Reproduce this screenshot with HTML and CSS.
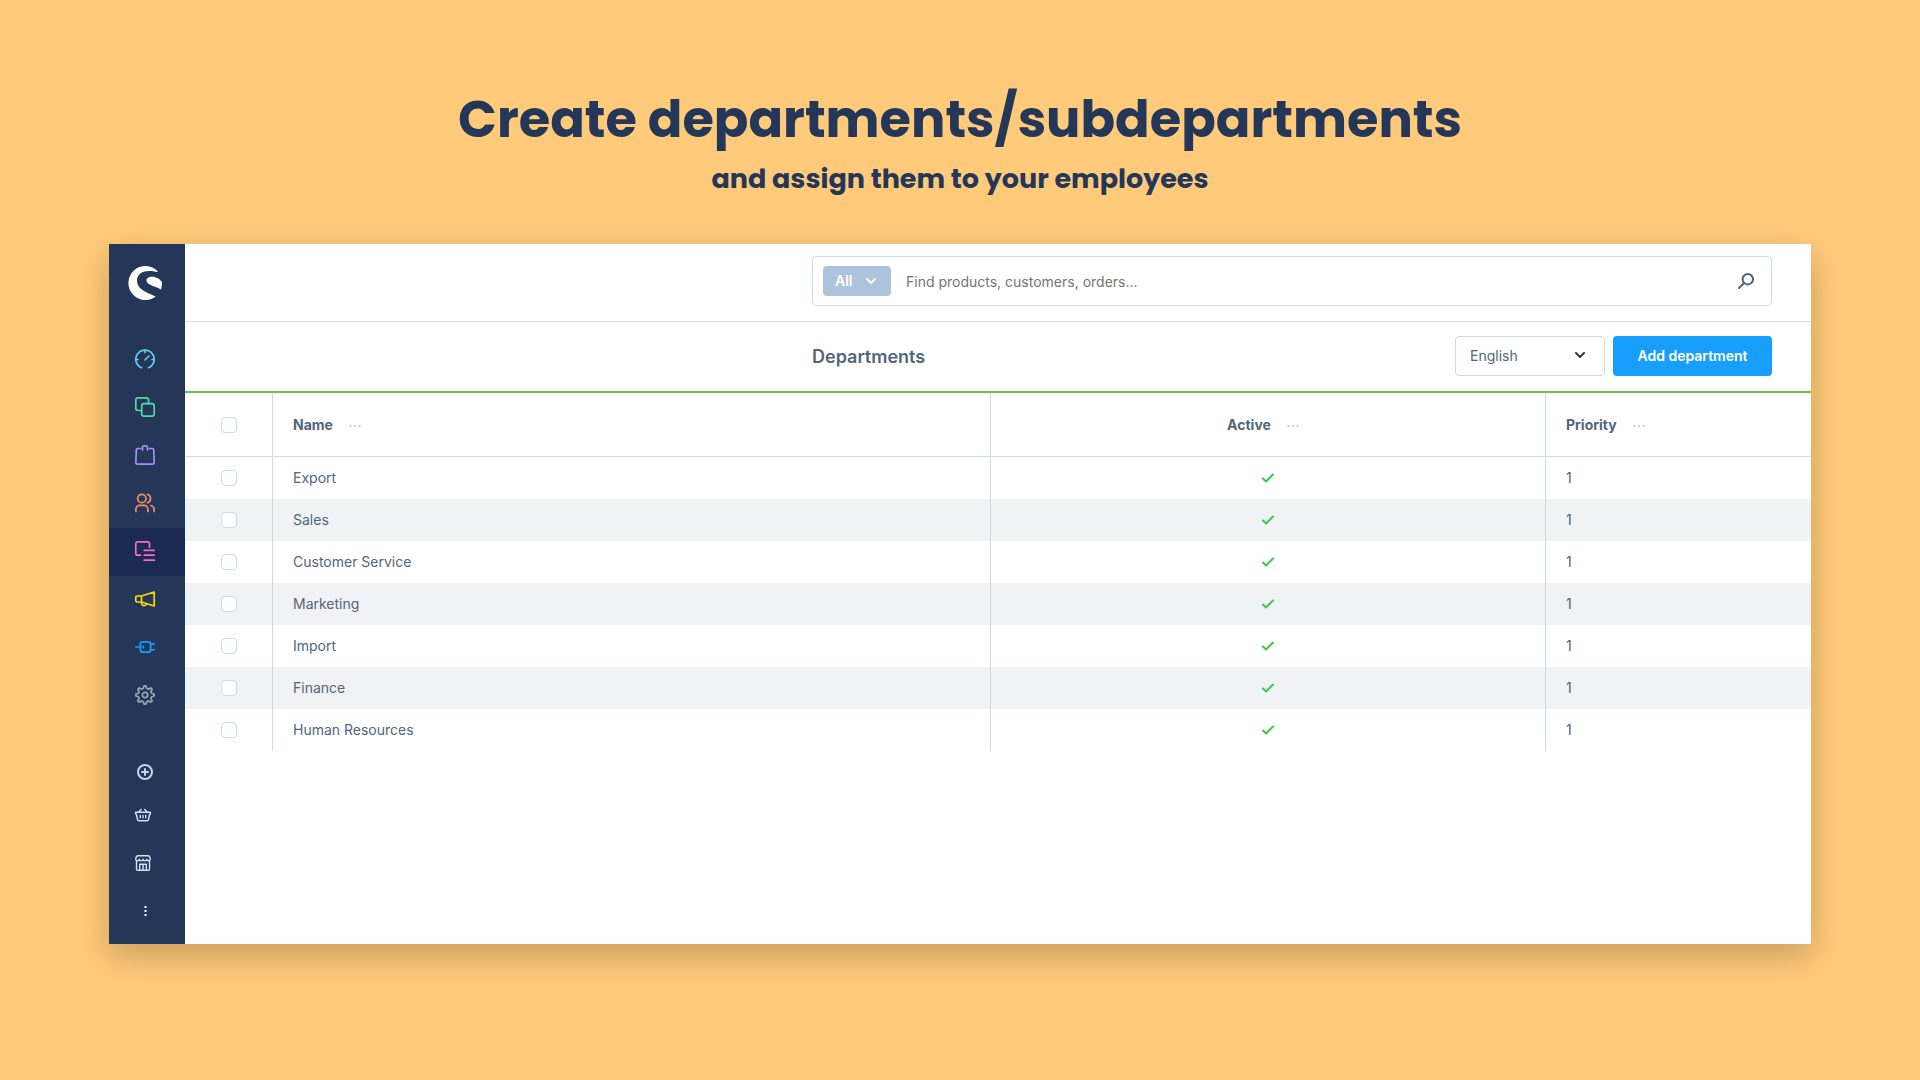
FILE: index.html
```html
<!DOCTYPE html>
<html lang="en">
<head>
<meta charset="utf-8">
<meta name="viewport" content="width=device-width, initial-scale=1">
<title>Departments</title>
<link rel="stylesheet" href="styles.css">
</head>
<body>
<header class="hero">
  <h1 class="hero-title">Create departments/subdepartments</h1>
  <p class="hero-subtitle">and assign them to your employees</p>
</header>

<div class="app">
  <aside class="sidebar">
    <a class="logo" href="#" aria-label="Home">
      <svg width="34" height="34" viewBox="0 0 34 34" fill="#fff"><path d="M29.6 5.2A17 17 0 1 0 27.2 31c.3-.3.2-.6-.2-.8C22.700 27.500 9 24.800 9 14.500 9 8 14.600 4.900 21 4.900c3 0 5.600.5 8.400 1 .4 0 .5-.4.2-.7zM33.900 16.200c-1.800-3.100-5.700-5.400-9.700-5.400-3.300 0-5.700 1.400-5.700 3.700 0 4.400 8.300 5.300 13.800 8.800.4.300.7.200.8-.2.700-2 1-4.600.8-6.900z"/></svg>
    </a>
    <nav class="nav" aria-label="Main">
      <a class="nav-item cyan" href="#" aria-label="Dashboard"><svg class="icon" viewBox="0 0 20 20"><path d="M6.600 18.800A9.200 9.200 0 1 1 13.400 18.800M10 1.500v2M1 10.500h2M17 10.500h2M10 11l4-4"/></svg></a>
      <a class="nav-item green" href="#" aria-label="Catalogues"><svg class="icon" viewBox="0 0 20 20"><path d="M6.500 13.500H3A2.200 2.200 0 0 1 .8 11.300V3A2.200 2.200 0 0 1 3 .8h8.300A2.200 2.200 0 0 1 13.500 3v3.500"/><rect x="6.700" y="6.700" width="12.500" height="12.500" rx="2.200"/></svg></a>
      <a class="nav-item violet" href="#" aria-label="Orders"><svg class="icon" viewBox="0 0 20 20"><path d="M7.500 5V2.300A1.500 1.500 0 0 1 9 .8h2a1.500 1.500 0 0 1 1.500 1.500V5M5.500 3.500H2.800a1.500 1.500 0 0 0-1.500 1.500L.8 17.500a1.600 1.600 0 0 0 1.600 1.700h15.200a1.600 1.600 0 0 0 1.600-1.700L18.700 5a1.500 1.500 0 0 0-1.500-1.500h-2.700"/></svg></a>
      <a class="nav-item orange" href="#" aria-label="Customers"><svg class="icon" viewBox="0 0 20 20"><circle cx="6.800" cy="5.500" r="4.200"/><path d="M12.500 1.300a4.500 4.500 0 0 1 0 8.500M.9 18.500v-2.300A3.800 3.800 0 0 1 4.700 12.400h4.400a3.800 3.800 0 0 1 3.800 3.800v2.300M15.800 12.500c2 .5 3.300 2 3.300 3.900v2.100"/></svg></a>
      <a class="nav-item pink active" href="#" aria-label="Content"><svg class="icon" viewBox="0 0 20 20"><path d="M5.500 14.200H2.800a2 2 0 0 1-2-2V2.800a2 2 0 0 1 2-2h9.700a2 2 0 0 1 2 2v3.400M9.200 9.300h10M9.200 14.200h10M9.200 19.200h10"/></svg></a>
      <a class="nav-item yellow" href="#" aria-label="Marketing"><svg class="icon" viewBox="0 0 20 20"><path d="M6.500 7L19.200 3v14L6.500 13zM6.500 7H2a1.200 1.200 0 0 0-1.200 1.200v3.600A1.200 1.200 0 0 0 2 13h4.500M6.500 13v1.200a2.500 2.500 0 0 0 4.700 1.200"/></svg></a>
      <a class="nav-item blue" href="#" aria-label="Extensions"><svg class="icon" viewBox="0 0 20 20"><path d="M.8 10h4.600M15.600 7.200h3.600M15.600 12.800h3.600M8.300 9.300v1.400"/><rect x="5.400" y="4.900" width="10.200" height="10.200" rx="2"/></svg></a>
      <a class="nav-item grey" href="#" aria-label="Settings"><svg class="icon" viewBox="0 0 20 20"><path d="M8.300 3.300L9 .9h2l.7 2.400 1.900.8 2.200-1.200 1.400 1.400-1.300 2.200.8 1.800 2.400.7v2l-2.400.7-.8 1.900 1.200 2.200-1.400 1.400-2.200-1.300-1.800.8-.7 2.400H9l-.7-2.400-1.900-.8-2.200 1.300-1.400-1.400 1.300-2.200-.8-1.900-2.400-.7V9l2.400-.7.8-1.800-1.300-2.200 1.400-1.400 2.200 1.200z"/><circle cx="10" cy="10" r="2.700"/></svg></a>
    </nav>
    <div class="tools">
      <button class="tool tool-short" type="button" aria-label="Add"><svg class="tool-icon bold" viewBox="0 0 16 16"><circle cx="8" cy="8" r="7"/><path d="M8 5v6M5 8h6"/></svg></button>
      <a class="tool tool-left" href="#" aria-label="Store basket"><svg class="tool-icon" viewBox="0 0 16 16"><path d="M.7 5.200h14.600v1.600a.8.800 0 0 1-.8.700M1.500 7.500a.8.800 0 0 1-.8-.7V5.200M1.500 7.500l1 5a1.500 1.500 0 0 0 1.500 1.200h8a1.500 1.500 0 0 0 1.500-1.200l1-5M3.700 5l2.500-2.600M12.300 5L9.800 2.400M5.300 8.500v2.300M8 8.500v2.300M10.700 8.500v2.300"/></svg></a>
      <a class="tool tool-left" href="#" aria-label="Storefront"><svg class="tool-icon" viewBox="0 0 16 16"><path d="M3 .7h10c1.300 0 2.300 1.800 2.300 3.300 0 2.200-3.300 2.200-3.600.3-.3 1.900-3.400 1.900-3.700 0-.3 1.900-3.400 1.900-3.700 0C4 6.200.7 6.200.7 4 .7 2.500 1.700.7 3 .7zM1.500 6v8.300a1 1 0 0 0 1 1h11a1 1 0 0 0 1-1V6M4.700 15.300V9.200h6.600v6.100M8 9.200v6.100"/></svg></a>
      <button class="tool" type="button" aria-label="More"><svg class="tool-icon dots" viewBox="0 0 16 16"><path d="M7.500 3h2v2h-2zM7.500 7h2v2h-2zM7.500 11h2v2h-2z"/></svg></button>
    </div>
  </aside>

  <main class="main">
    <div class="topbar">
      <form class="search" role="search">
        <button class="scope" type="button">All
          <svg width="10" height="6" viewBox="0 0 10 6"><path d="M1 1l4 4 4-4"/></svg>
        </button>
        <input class="search-input" type="search" aria-label="Search" placeholder="Find products, customers, orders...">
        <button class="search-button" type="button" aria-label="Search">
          <svg width="16" height="16" viewBox="0 0 16 16"><circle cx="9.800" cy="6.200" r="5.200"/><path d="M6 10L1 15"/></svg>
        </button>
      </form>
    </div>

    <div class="pagebar">
      <div class="pagebar-inner">
        <h2 class="page-title">Departments</h2>
        <div class="select-wrap">
          <select class="language" aria-label="Language"><option>English</option></select>
          <svg class="chevron" width="10" height="6" viewBox="0 0 10 6"><path d="M1 1l4 4 4-4"/></svg>
        </div>
        <button class="primary" type="button">Add department</button>
      </div>
    </div>

    <table class="grid">
      <colgroup><col class="col-check"><col class="col-name"><col class="col-active"><col></colgroup>
      <thead>
        <tr>
          <th class="check"><input class="box" type="checkbox" aria-label="Select all"></th>
          <th><div class="head">Name<button class="more" type="button" aria-label="Name options"><svg width="12" height="4" viewBox="0 0 12 4"><circle cx="1.500" cy="2" r="1.200"/><circle cx="6" cy="2" r="1.200"/><circle cx="10.500" cy="2" r="1.200"/></svg></button></div></th>
          <th><div class="head centered">Active<button class="more" type="button" aria-label="Active options"><svg width="12" height="4" viewBox="0 0 12 4"><circle cx="1.500" cy="2" r="1.200"/><circle cx="6" cy="2" r="1.200"/><circle cx="10.500" cy="2" r="1.200"/></svg></button></div></th>
          <th><div class="head">Priority<button class="more" type="button" aria-label="Priority options"><svg width="12" height="4" viewBox="0 0 12 4"><circle cx="1.500" cy="2" r="1.200"/><circle cx="6" cy="2" r="1.200"/><circle cx="10.500" cy="2" r="1.200"/></svg></button></div></th>
        </tr>
      </thead>
      <tbody>
        <tr><td class="check"><input class="box" type="checkbox" aria-label="Select Export"></td><td>Export</td><td class="state"><svg class="tick" viewBox="0 0 12 10"><path d="M1 5.500l3 3L11 1.500"/></svg></td><td>1</td></tr>
        <tr><td class="check"><input class="box" type="checkbox" aria-label="Select Sales"></td><td>Sales</td><td class="state"><svg class="tick" viewBox="0 0 12 10"><path d="M1 5.500l3 3L11 1.500"/></svg></td><td>1</td></tr>
        <tr><td class="check"><input class="box" type="checkbox" aria-label="Select Customer Service"></td><td>Customer Service</td><td class="state"><svg class="tick" viewBox="0 0 12 10"><path d="M1 5.500l3 3L11 1.500"/></svg></td><td>1</td></tr>
        <tr><td class="check"><input class="box" type="checkbox" aria-label="Select Marketing"></td><td>Marketing</td><td class="state"><svg class="tick" viewBox="0 0 12 10"><path d="M1 5.500l3 3L11 1.500"/></svg></td><td>1</td></tr>
        <tr><td class="check"><input class="box" type="checkbox" aria-label="Select Import"></td><td>Import</td><td class="state"><svg class="tick" viewBox="0 0 12 10"><path d="M1 5.500l3 3L11 1.500"/></svg></td><td>1</td></tr>
        <tr><td class="check"><input class="box" type="checkbox" aria-label="Select Finance"></td><td>Finance</td><td class="state"><svg class="tick" viewBox="0 0 12 10"><path d="M1 5.500l3 3L11 1.500"/></svg></td><td>1</td></tr>
        <tr><td class="check"><input class="box" type="checkbox" aria-label="Select Human Resources"></td><td>Human Resources</td><td class="state"><svg class="tick" viewBox="0 0 12 10"><path d="M1 5.500l3 3L11 1.500"/></svg></td><td>1</td></tr>
      </tbody>
    </table>
  </main>
</div>
</body>
</html>
```

FILE: styles.css
```css
:root {
  --navy: #243758;
  --text: #52667a;
  --line: #d1d9e0;
}

* { box-sizing: border-box; }

body {
  margin: 0;
  min-height: 100vh;
  padding: 84px 109px;
  background: #ffca7a;
  color: var(--text);
  font: 14px/20px Inter, "Liberation Sans", sans-serif;
}

button, input, select { font: inherit; color: inherit; }
button { border: 0; padding: 0; background: none; cursor: pointer; }
svg { display: block; }

/* Heading above the window */
.hero { height: 160px; text-align: center; color: var(--navy); font-family: Poppins, Inter, sans-serif; }
.hero-title { margin: 0; font-size: 51px; line-height: 70px; font-weight: 700; }
.hero-subtitle { margin: 7px 0 0; font-size: 27px; line-height: 36px; font-weight: 700; }

/* Window */
.app {
  display: flex;
  min-height: 700px;
  background: #fff;
  box-shadow: 0 12px 32px rgba(0, 0, 0, 0.22);
}

/* Sidebar */
.sidebar {
  display: flex;
  flex-direction: column;
  flex: 0 0 76px;
  padding: 22px 0 9px;
  background: var(--navy);
}
.logo { padding-left: 19px; margin-bottom: 36px; }
.nav { display: flex; flex-direction: column; }
.nav-item { display: flex; align-items: center; height: 48px; padding: 0 0 2px 26px; }
.nav-item.active { background: #1a2a50; }
.icon, .tool-icon {
  width: 20px;
  height: 20px;
  fill: none;
  stroke: currentColor;
  stroke-width: 1.7;
  stroke-linecap: round;
  stroke-linejoin: round;
  overflow: visible;
}
.cyan { color: #64cdec; }
.green { color: #57d9a3; }
.violet { color: #a092f0; }
.orange { color: #f88962; }
.pink { color: #f16dc0; }
.yellow { color: #ffd700; }
.blue { color: #189eff; }
.grey { color: #98a5b6; }

.tools { display: flex; flex-direction: column; margin-top: auto; color: #d3e0f8; }
.tool { display: flex; align-items: center; height: 48px; padding-left: 28px; color: inherit; }
.tool-short { height: 38px; }
.tool-left { padding-left: 26px; }
.tool-icon { width: 16px; height: 16px; stroke-width: 1.4; }
.tool-icon.bold { stroke-width: 2; color: #c3d2ec; }
.tool-icon.dots { fill: #fff; stroke: none; }

/* Search bar */
.main { flex: 1; min-width: 0; }
.topbar {
  display: flex;
  justify-content: flex-end;
  padding: 12px 39px 15px;
  border-bottom: 1px solid var(--line);
}
.search {
  display: flex;
  align-items: center;
  width: 100%;
  max-width: 960px;
  height: 50px;
  padding: 0 17px 0 10px;
  border: 1px solid var(--line);
  border-radius: 4px;
}
.scope {
  display: flex;
  align-items: center;
  justify-content: space-between;
  width: 68px;
  height: 30px;
  padding: 0 15px 0 12px;
  border-radius: 4px;
  background: #adc3dc;
  color: #fff;
  font-weight: 600;
}
.scope svg, .chevron, .search-button svg, .tick {
  fill: none;
  stroke: currentColor;
  stroke-width: 2;
  stroke-linecap: round;
  stroke-linejoin: round;
}
.search-input {
  flex: 1;
  min-width: 0;
  height: 40px;
  padding: 0 15px;
  border: 0;
  outline: 0;
  background: none;
}
.search-input::placeholder { color: #757575; opacity: 1; }

/* Page bar */
.pagebar {
  display: flex;
  justify-content: flex-end;
  padding: 14px 39px 15px;
  border-bottom: 2px solid #72bf44;
}
.pagebar-inner { display: flex; align-items: center; gap: 8px; width: 100%; max-width: 960px; }
.page-title { flex: 1; margin: 0; padding-top: 2px; font-size: 18px; line-height: 24px; font-weight: 600; }
.select-wrap { position: relative; width: 150px; }
.language {
  display: block;
  appearance: none;
  width: 100%;
  height: 40px;
  padding: 0 14px;
  border: 1px solid var(--line);
  border-radius: 4px;
  background: #fff;
}
.chevron { position: absolute; top: 16px; right: 20px; color: #2f3a48; pointer-events: none; }
.primary {
  min-width: 159px;
  height: 40px;
  padding: 0 16px;
  border-radius: 4px;
  background: #189eff;
  color: #fff;
  font-weight: 600;
  white-space: nowrap;
}

/* Data table */
.grid { width: 100%; border-collapse: separate; border-spacing: 0; table-layout: fixed; }
.col-check { width: 88px; }
.col-name { width: 44.16%; }
.col-active { width: 34.13%; }
.grid th, .grid td { padding: 0 20px; text-align: left; border-right: 1px solid var(--line); }
.grid th:last-child, .grid td:last-child { border-right: 0; }
.grid th { height: 64px; border-bottom: 1px solid var(--line); font-weight: 700; }
.grid td { height: 42px; }
.grid tbody tr:nth-child(even) { background: #f0f2f5; }
.head { display: flex; align-items: center; gap: 6px; }
.centered { justify-content: center; }
.more { display: flex; align-items: center; justify-content: center; width: 32px; height: 24px; padding-top: 2px; }
.more svg { fill: #c9d1da; }
.grid .check { padding: 0; text-align: center; }
.box {
  display: block;
  appearance: none;
  width: 16px;
  height: 16px;
  margin: 0 auto;
  border: 1px solid var(--line);
  border-radius: 4px;
  background: #fff;
}
.tick { width: 12px; height: 10px; margin: 0 auto; color: #3cc84d; }
```
